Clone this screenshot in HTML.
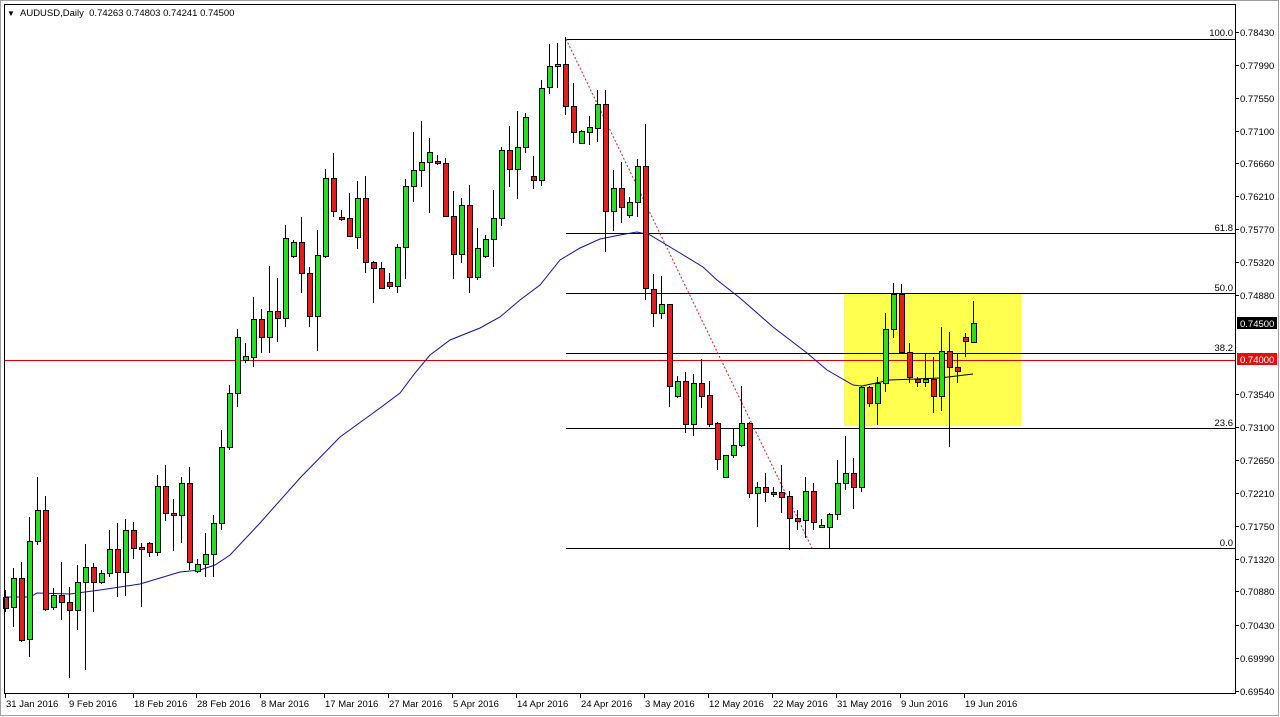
<!DOCTYPE html>
<html><head><meta charset="utf-8"><style>
html,body{margin:0;padding:0;background:#fff;width:1280px;height:717px;overflow:hidden}
svg{display:block}
text{font-family:"Liberation Sans",sans-serif;font-size:9.5px;fill:#000}
</style></head><body>
<svg id="s" width="1280" height="717" xmlns="http://www.w3.org/2000/svg">
<rect x="0" y="0" width="1280" height="717" fill="#fff"/>
<rect x="0.5" y="0.5" width="1278" height="715" fill="none" stroke="#a0a0a0"/>
<rect x="844" y="294" width="177" height="132" fill="#ffff50"/>
<g stroke="#000" stroke-width="1">
<line x1="566" y1="39.5" x2="1235" y2="39.5"/>
<line x1="566" y1="233.5" x2="1235" y2="233.5"/>
<line x1="566" y1="293.5" x2="1235" y2="293.5"/>
<line x1="566" y1="353.5" x2="1235" y2="353.5"/>
<line x1="566" y1="428.5" x2="1235" y2="428.5"/>
<line x1="566" y1="548.5" x2="1235" y2="548.5"/>
</g>
<line x1="4" y1="360.5" x2="1235" y2="360.5" stroke="#e00000"/>
<line x1="566" y1="39" x2="812" y2="548" stroke="#d02020" stroke-dasharray="2,2"/>
<polyline fill="none" stroke="#1010a0" points="4,597 30,597 37,593 70,594 100,590 140,584 180,572 200,570 215,565 230,555 260,523 300,478 340,437 380,408 400,393 415,373 430,355 450,340 480,328 500,317 520,300 540,285 560,260 580,248 600,239 620,235 637,232 650,235 680,253 703,267 717,280 740,298 773,327 807,353 827,370 853,385 862,386"/>
<polyline fill="none" stroke="#000" points="862,386 890,380 940,378 973,374"/>
<g id="c"></g>
<g>
<text x="1233" y="36" text-anchor="end">100.0</text>
<text x="1233" y="231" text-anchor="end">61.8</text>
<text x="1233" y="291" text-anchor="end">50.0</text>
<text x="1233" y="351" text-anchor="end">38.2</text>
<text x="1233" y="426" text-anchor="end">23.6</text>
<text x="1233" y="546" text-anchor="end">0.0</text>
</g>
<rect x="4.5" y="4.5" width="1231" height="689" fill="none" stroke="#000"/>
<g id="ax"></g>
<text x="7" y="16" style="font-size:8px">▼</text>
<text x="20" y="16">AUDUSD,Daily&#160;&#160;0.74263 0.74803 0.74241 0.74500</text>
</svg>
<script>
var d=[
[597,608,590,612,0],[578,607,568,627,1],[578,640,562,642,0],[541,639,517,657,1],[510,541,477,545,1],[510,609,496,611,0],[595,607,588,610,1],[595,602,562,620,0],[602,610,587,678,0],[582,610,565,630,1],[567,582,544,670,1],[567,582,563,612,0],[573,582,570,584,1],[549,573,530,577,1],[549,572,523,597,0],[530,572,519,596,1],[530,548,522,559,0],[547,549,543,607,0],[543,552,542,557,0],[486,552,475,556,1],[486,513,465,521,0],[513,515,499,551,0],[483,515,477,543,1],[483,562,467,570,0],[564,571,559,573,1],[554,564,533,577,1],[523,554,515,577,1],[447,523,430,530,1],[393,447,385,450,1],[337,393,329,407,1],[356,360,343,363,1],[319,357,297,367,1],[319,337,309,353,0],[311,337,266,353,1],[311,318,278,342,0],[238,318,225,327,1],[242,256,240,258,1],[242,273,217,293,0],[273,316,267,327,0],[255,316,230,351,1],[178,256,169,258,1],[178,211,153,217,0],[217,218,210,221,0],[218,236,193,237,0],[198,237,181,249,1],[198,262,176,273,0],[262,268,261,303,0],[268,288,262,288,0],[282,286,273,289,0],[247,286,244,293,1],[186,247,179,279,1],[170,186,132,202,1],[162,170,121,187,1],[152,162,138,213,1],[161,163,155,165,0],[163,216,158,217,0],[216,254,191,279,0],[205,254,198,263,1],[205,277,185,293,0],[248,277,228,280,1],[239,256,235,258,1],[218,239,190,267,1],[150,218,147,226,1],[150,169,126,187,0],[147,169,111,199,1],[117,147,113,153,1],[176,180,156,189,0],[88,180,80,186,1],[66,87,44,94,1],[64,66,43,88,1],[64,106,37,115,0],[106,132,83,143,0],[131,143,130,144,1],[127,132,116,145,1],[104,128,90,142,1],[104,211,90,252,0],[188,211,170,231,1],[188,207,162,223,0],[202,215,197,218,1],[166,202,159,217,1],[166,288,124,300,0],[289,313,274,327,0],[304,313,276,319,1],[304,386,304,407,0],[381,396,376,398,1],[381,424,372,433,0],[383,424,374,436,1],[383,396,359,408,0],[395,424,381,427,0],[423,459,422,470,0],[455,477,455,477,1],[445,455,429,458,1],[423,445,386,447,1],[423,493,422,498,0],[487,493,482,527,1],[487,492,473,502,0],[492,493,487,497,0],[492,497,465,513,0],[496,518,491,550,0],[518,521,510,530,0],[491,520,477,538,1],[491,522,483,530,0],[525,527,519,528,1],[514,527,513,548,1],[483,514,460,520,1],[473,483,436,490,1],[473,487,458,509,0],[387,487,386,492,1],[387,403,386,407,0],[383,403,377,425,1],[329,383,313,392,1],[294,329,283,338,1],[294,352,284,353,0],[352,377,343,383,0],[379,382,377,387,0],[379,382,353,387,1],[379,396,357,413,0],[351,396,327,411,1],[351,367,332,447,0],[367,371,353,383,0],[337,341,333,357,0],[323,342,301,343,1]];
var g=document.getElementById('c'),h='';
d.forEach(function(c,i){var x=5+8*i;h+='<line x1="'+(x+.5)+'" y1="'+c[2]+'" x2="'+(x+.5)+'" y2="'+c[3]+'" stroke="#000"/>';
var t=c[0],b=Math.max(c[1],c[0]+2);h+='<rect x="'+(x-2+.5)+'" y="'+(t+.5)+'" width="5" height="'+(b-t)+'" fill="'+(c[4]?'#22e022':'#e02020')+'" stroke="#000"/>';});
g.innerHTML=h;
var ax='',p=[['0.78430',32],['0.77990',65],['0.77550',98],['0.77100',131],['0.76660',163],['0.76210',196],['0.75770',229],['0.75320',262],['0.74880',295],['0.73540',394],['0.73100',427],['0.72650',460],['0.72210',493],['0.71750',526],['0.71320',559],['0.70880',591],['0.70430',625],['0.69990',658],['0.69540',691]];
p.forEach(function(q){ax+='<line x1="1235" y1="'+(q[1]+.5)+'" x2="1239" y2="'+(q[1]+.5)+'" stroke="#000"/><text x="1240" y="'+(q[1]+4)+'">'+q[0]+'</text>';});
ax+='<rect x="1237" y="317" width="40" height="12" fill="#000"/><text x="1240" y="327" style="fill:#fff">0.74500</text>';
ax+='<rect x="1237" y="353" width="40" height="12" fill="#e01010"/><text x="1240" y="363" style="fill:#fff">0.74000</text>';
var dt=[['31 Jan 2016',5],['9 Feb 2016',68],['18 Feb 2016',133],['28 Feb 2016',196],['8 Mar 2016',260],['17 Mar 2016',324],['27 Mar 2016',388],['5 Apr 2016',452],['14 Apr 2016',516],['24 Apr 2016',580],['3 May 2016',644],['12 May 2016',708],['22 May 2016',772],['31 May 2016',836],['9 Jun 2016',900],['19 Jun 2016',964]];
dt.forEach(function(q){ax+='<line x1="'+(q[1]+.5)+'" y1="693" x2="'+(q[1]+.5)+'" y2="698" stroke="#000"/><text x="'+(q[1]+1)+'" y="707">'+q[0]+'</text>';});
document.getElementById('ax').innerHTML=ax;
</script>
</body></html>
